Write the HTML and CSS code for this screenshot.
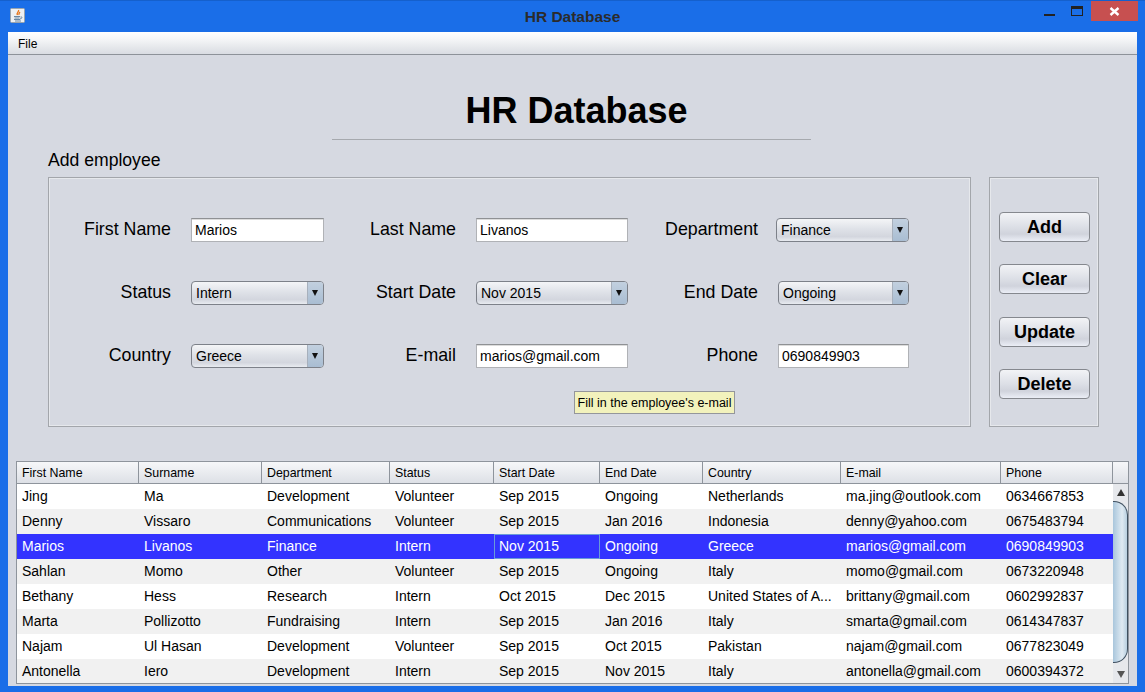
FILE: index.html
```html
<!DOCTYPE html>
<html lang="en">
<head>
  <meta charset="UTF-8">
  <title>HR Database</title>
  <link rel="stylesheet" href="styles.css">
</head>
<body>
  <div class="window">
    <div class="titlebar">
      <div class="app-icon">
        <svg width="15" height="15" viewBox="0 0 15 15">
          <rect x="0.5" y="0.5" width="14" height="14" rx="1" fill="#eef0f2" stroke="#9aa4ae"/>
          <path d="M8.5 2 C9.5 3.5 6 4.5 7.5 7 M10 4 C9 5 8.500 5.500 9 7" fill="none" stroke="#e8761a" stroke-width="1.300"/>
          <path d="M4 8.500 H10 M4.500 10 H9.500 M4 11.500 H10 M5 13 H11 M10.500 9 C12.500 8.500 12.500 10.500 10 11" fill="none" stroke="#5a7a98" stroke-width="0.900"/>
        </svg>
      </div>
      <div class="title">HR Database</div>
      <div class="controls">
        <div class="btn-min"><span></span></div>
        <div class="btn-max"><span></span></div>
        <div class="btn-close">
          <svg width="11" height="9" viewBox="0 0 11 9"><path d="M1.500 1 L9.500 8 M9.500 1 L1.500 8" stroke="#fff" stroke-width="2.400"/></svg>
        </div>
      </div>
    </div>
    <div class="client">
      <div class="menubar"><span>File</span></div>
      <div class="content">
        <h1>HR Database</h1>
        <div class="rule"></div>
        <div class="section-label">Add employee</div>
        <div class="top-row">
          <div class="form-panel">
            <div class="form-grid">
              <label>First Name</label>
              <div class="field">Marios</div>
              <label>Last Name</label>
              <div class="field">Livanos</div>
              <label>Department</label>
              <div class="combo combo-wide"><span>Finance</span><i></i></div>

              <label>Status</label>
              <div class="combo"><span>Intern</span><i></i></div>
              <label>Start Date</label>
              <div class="combo"><span>Nov 2015</span><i></i></div>
              <label>End Date</label>
              <div class="combo"><span>Ongoing</span><i></i></div>

              <label>Country</label>
              <div class="combo"><span>Greece</span><i></i></div>
              <label>E-mail</label>
              <div class="field">marios@gmail.com</div>
              <label>Phone</label>
              <div class="field">0690849903</div>
            </div>
            <div class="tooltip">Fill in the employee's e-mail</div>
          </div>
          <div class="button-panel">
            <button>Add</button>
            <button>Clear</button>
            <button class="update">Update</button>
            <button>Delete</button>
          </div>
        </div>
        <div class="table-wrap">
          <div class="table-main">
            <table>
              <colgroup>
                <col class="c1"><col class="c2"><col class="c3"><col class="c4"><col class="c5"><col class="c6"><col class="c7"><col class="c8"><col class="c9">
              </colgroup>
              <thead>
                <tr><th>First Name</th><th>Surname</th><th>Department</th><th>Status</th><th>Start Date</th><th>End Date</th><th>Country</th><th>E-mail</th><th>Phone</th></tr>
              </thead>
              <tbody>
                <tr><td>Jing</td><td>Ma</td><td>Development</td><td>Volunteer</td><td>Sep 2015</td><td>Ongoing</td><td>Netherlands</td><td>ma.jing@outlook.com</td><td>0634667853</td></tr>
                <tr><td>Denny</td><td>Vissaro</td><td>Communications</td><td>Volunteer</td><td>Sep 2015</td><td>Jan 2016</td><td>Indonesia</td><td>denny@yahoo.com</td><td>0675483794</td></tr>
                <tr class="selected"><td>Marios</td><td>Livanos</td><td>Finance</td><td>Intern</td><td class="focus">Nov 2015</td><td>Ongoing</td><td>Greece</td><td>marios@gmail.com</td><td>0690849903</td></tr>
                <tr><td>Sahlan</td><td>Momo</td><td>Other</td><td>Volunteer</td><td>Sep 2015</td><td>Ongoing</td><td>Italy</td><td>momo@gmail.com</td><td>0673220948</td></tr>
                <tr><td>Bethany</td><td>Hess</td><td>Research</td><td>Intern</td><td>Oct 2015</td><td>Dec 2015</td><td>United States of A...</td><td>brittany@gmail.com</td><td>0602992837</td></tr>
                <tr><td>Marta</td><td>Pollizotto</td><td>Fundraising</td><td>Intern</td><td>Sep 2015</td><td>Jan 2016</td><td>Italy</td><td>smarta@gmail.com</td><td>0614347837</td></tr>
                <tr><td>Najam</td><td>Ul Hasan</td><td>Development</td><td>Volunteer</td><td>Sep 2015</td><td>Oct 2015</td><td>Pakistan</td><td>najam@gmail.com</td><td>0677823049</td></tr>
                <tr><td>Antonella</td><td>Iero</td><td>Development</td><td>Intern</td><td>Sep 2015</td><td>Nov 2015</td><td>Italy</td><td>antonella@gmail.com</td><td>0600394372</td></tr>
              </tbody>
            </table>
          </div>
          <div class="scroll-col">
            <div class="corner"></div>
            <div class="scrollbar">
              <div class="arrow"><i class="up"></i></div>
              <div class="track"><div class="thumb"></div></div>
              <div class="arrow"><i class="down"></i></div>
            </div>
          </div>
        </div>
      </div>
    </div>
  </div>
</body>
</html>
```

FILE: styles.css
```css
html, body {
  margin: 0;
  height: 100%;
  overflow: hidden;
}
body {
  font-family: "Liberation Sans", Arial, sans-serif;
  color: #000;
}
.window {
  width: 1145px;
  height: 692px;
  box-sizing: border-box;
  background: #1a6ee8;
  border-top: 1px solid #1560cc;
  padding: 0 8px 6px 8px;
  display: flex;
  flex-direction: column;
}
.titlebar {
  height: 31px;
  flex: none;
  display: flex;
  position: relative;
  align-items: center;
  justify-content: center;
}
.app-icon {
  position: absolute;
  left: 2px;
  top: 7px;
  line-height: 0;
}
.title {
  font-weight: bold;
  font-size: 15.500px;
  color: #2b2b2b;
}
.controls {
  position: absolute;
  right: -1px;
  top: 0;
  display: flex;
}
.btn-min {
  width: 27px;
  height: 20px;
  position: relative;
}
.btn-min span {
  position: absolute;
  left: 0;
  top: 13px;
  width: 11px;
  height: 2px;
  background: #222;
}
.btn-max {
  width: 20px;
  height: 20px;
  position: relative;
}
.btn-max span {
  position: absolute;
  left: 0;
  top: 5px;
  width: 10px;
  height: 6px;
  border: 1px solid #222;
  border-top-width: 3px;
}
.btn-close {
  width: 47px;
  height: 20px;
  background: #c75050;
  display: flex;
  align-items: center;
  justify-content: center;
}
.client {
  flex: 1;
  display: flex;
  flex-direction: column;
  background: #d6d9e1;
  min-height: 0;
}
.menubar {
  height: 23px;
  flex: none;
  box-sizing: border-box;
  background: linear-gradient(#ffffff, #f6f7f8 30%, #d9dce2);
  border-bottom: 1px solid #8d9299;
  font-size: 12px;
  line-height: 24px;
  padding-left: 10px;
}
.content {
  flex: 1;
  padding: 0 8px;
  min-height: 0;
  overflow: hidden;
}
h1 {
  margin: 35px 0 0;
  font-size: 36px;
  line-height: 41px;
  text-align: center;
  font-weight: bold;
  padding-left: 8px;
}
.rule {
  height: 1px;
  width: 479px;
  margin: 8px 0 0 316px;
  background: #a6a9ae;
}
.section-label {
  font-size: 17.600px;
  line-height: 18px;
  margin: 11px 0 0 32px;
}
.top-row {
  display: flex;
  margin: 8px 0 0 32px;
  gap: 18px;
}
.form-panel {
  width: 923px;
  height: 250px;
  box-sizing: border-box;
  border: 1px solid #a3a6ab;
  box-shadow: inset 0 0 0 1px #e6e8ec;
  position: relative;
  padding: 40px 0 0 0;
}
.form-grid {
  display: grid;
  grid-template-columns: 142px 133px 152px 152px 150px 131px;
  grid-auto-rows: 24px;
  row-gap: 39px;
}
.form-grid label {
  font-size: 17.800px;
  line-height: 22px;
  text-align: right;
  padding-right: 20px;
}
.field {
  box-sizing: border-box;
  height: 24px;
  background: #fff;
  border: 1px solid #b0b2b6;
  border-top-color: #8f9194;
  box-shadow: inset 0 1px 0 #dcdcdc;
  font-size: 14px;
  line-height: 22px;
  padding-left: 3px;
}
.combo {
  box-sizing: border-box;
  height: 24px;
  border: 1px solid #7d8189;
  border-radius: 4px;
  background: linear-gradient(#f4f5f7, #dfe2e8 45%, #d3d6de 80%, #e8ebf0);
  font-size: 14px;
  line-height: 23px;
  display: flex;
  justify-content: space-between;
  padding-left: 4px;
  overflow: hidden;
}
.combo-wide {
  margin-left: -2px;
}
.combo i {
  width: 16px;
  box-sizing: border-box;
  border-left: 1px solid #a7b0bc;
  background: linear-gradient(#c2d0df, #a9bdd2);
  position: relative;
}
.combo i::after {
  content: "";
  position: absolute;
  left: 4px;
  top: 8px;
  border-left: 3.500px solid transparent;
  border-right: 3.500px solid transparent;
  border-top: 6px solid #111;
}
.tooltip {
  position: absolute;
  left: 525px;
  top: 213px;
  width: 161px;
  height: 23px;
  box-sizing: border-box;
  background: #f2f2bc;
  border: 1px solid #94969b;
  font-size: 12.500px;
  line-height: 22px;
  text-align: center;
  white-space: nowrap;
}
.button-panel {
  width: 110px;
  height: 250px;
  box-sizing: border-box;
  border: 1px solid #a3a6ab;
  box-shadow: inset 0 0 0 1px #e6e8ec;
  padding: 34px 8px 0 9px;
  display: flex;
  flex-direction: column;
  gap: 22px;
}
.button-panel button {
  height: 30px;
  flex: none;
  padding: 0;
  font-family: inherit;
  font-weight: bold;
  font-size: 18px;
  color: #000;
  border: 1px solid #85888e;
  border-radius: 4px;
  background: linear-gradient(#f2f3f6, #dcdfe6 50%, #d0d3dc 75%, #ebeef6);
}
.button-panel .update {
  margin-top: 1px;
}
.table-wrap {
  margin-top: 34px;
  width: 1113px;
  height: 223px;
  box-sizing: border-box;
  border: 1px solid #8e949c;
  display: flex;
}
.table-main {
  width: 1096px;
  flex: none;
  overflow: hidden;
}
table {
  border-collapse: separate;
  border-spacing: 0;
  table-layout: fixed;
  width: 1096px;
}
.c1 { width: 122px; }
.c2 { width: 123px; }
.c3 { width: 128px; }
.c4 { width: 104px; }
.c5 { width: 106px; }
.c6 { width: 103px; }
.c7 { width: 138px; }
.c8 { width: 160px; }
.c9 { width: 112px; }
th {
  box-sizing: border-box;
  height: 22px;
  padding: 0 0 0 5px;
  font-size: 12.400px;
  font-weight: normal;
  text-align: left;
  background: linear-gradient(#f6f7f9, #dde0e6);
  border-right: 1px solid #8e949c;
  border-bottom: 1px solid #8e949c;
}
td {
  box-sizing: border-box;
  height: 25px;
  padding: 0 0 2px 5px;
  font-size: 14px;
  white-space: nowrap;
  overflow: hidden;
}
tbody tr {
  background: #fff;
}
tbody tr:nth-child(even) {
  background: #f1f1f1;
}
tbody tr.selected {
  background: #3333ff;
  color: #fff;
}
td.focus {
  outline: 1px solid #6a9bd8;
  outline-offset: -1px;
}
.scroll-col {
  width: 15px;
  flex: none;
  display: flex;
  flex-direction: column;
  background: #e6e8ec;
}
.corner {
  height: 22px;
  flex: none;
  box-sizing: border-box;
  background: linear-gradient(#f6f7f9, #dde0e6);
  border-bottom: 1px solid #8e949c;
}
.scrollbar {
  flex: 1;
  display: flex;
  flex-direction: column;
  min-height: 0;
}
.arrow {
  height: 17px;
  flex: none;
  display: flex;
  align-items: center;
  justify-content: center;
}
.arrow i {
  border-left: 4px solid transparent;
  border-right: 4px solid transparent;
}
.arrow .up {
  border-bottom: 7px solid #333;
}
.arrow .down {
  border-top: 7px solid #555;
}
.track {
  flex: 1;
  margin-bottom: 3px;
  display: flex;
  flex-direction: column;
  min-height: 0;
}
.thumb {
  flex: 1;
  box-sizing: border-box;
  border: 1px solid #3f5060;
  border-left: none;
  border-radius: 0 14px 14px 0;
  background: linear-gradient(90deg, #a9c6dc, #dfeaf2 65%, #b8cfdf);
}
```
